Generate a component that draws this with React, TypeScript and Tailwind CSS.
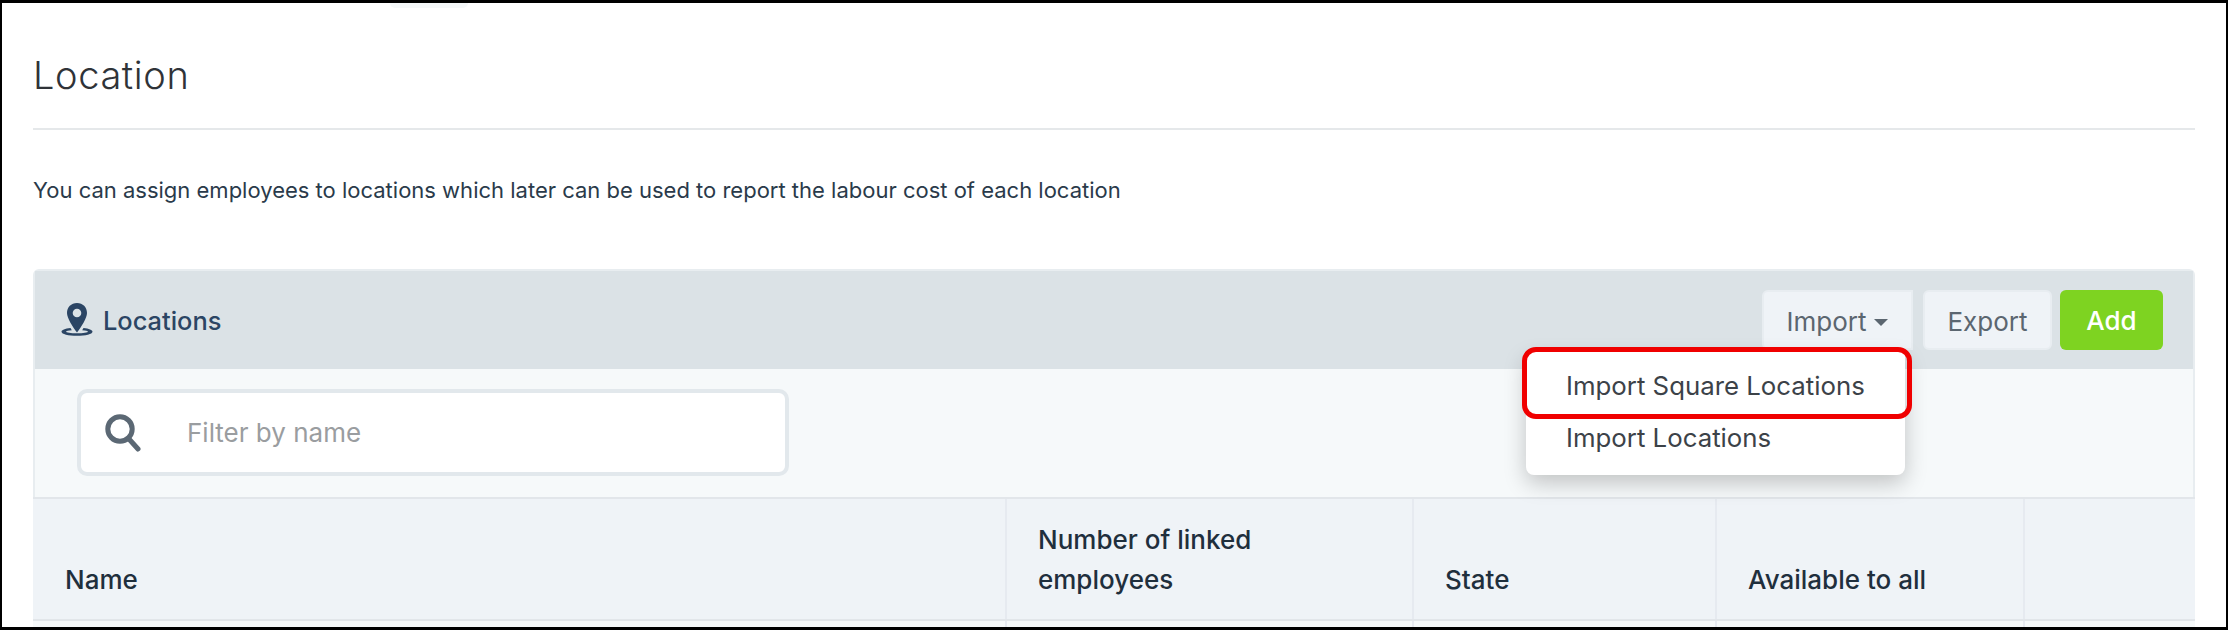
const font = { fontFamily: '"Inter", "Lato", sans-serif' }

function PinIcon() {
  return (
    <svg width="32" height="33" viewBox="0 0 32 33" className="shrink-0">
      <path d="M9.500 25C4 25.600 .5 27 .5 28.700c0 2.400 6.900 4.100 15.500 4.100s15.500-1.700 15.500-4.100c0-1.700-3.500-3.100-9-3.700l-1.300 2.300c3.300.3 5.800.8 5.800 1.400 0 .8-4.800 1.500-11 1.500s-11-.7-11-1.500c0-.6 2.500-1.100 5.800-1.400z" fill="#2b4564" />
      <path fillRule="evenodd" d="M16 0c5.800 0 10 4.300 10 10 0 5-5.500 13.500-10 19.500C11.500 23.500 6 15 6 10 6 4.300 10.200 0 16 0zm0 5.700a4.300 4.300 0 1 0 0 8.600 4.300 4.300 0 0 0 0-8.600z" fill="#2b4564" />
    </svg>
  )
}

function SearchIcon() {
  return (
    <svg width="36" height="38" viewBox="0 0 36 38" className="shrink-0">
      <circle cx="15" cy="15" r="12.200" fill="none" stroke="#5b6874" strokeWidth="5" />
      <path d="M24 25l9 10" fill="none" stroke="#5b6874" strokeWidth="5" strokeLinecap="round" />
    </svg>
  )
}

const columns = [
  { label: 'Name', width: 'w-[974px]', pad: 'pl-[32px]' },
  { label: 'Number of linked employees', width: 'w-[407px]', pad: 'pl-[31px] pr-[100px]' },
  { label: 'State', width: 'w-[303px]', pad: 'pl-[31px]' },
  { label: 'Available to all', width: 'w-[308px]', pad: 'pl-[31px]' },
  { label: '', width: 'w-[170px]', pad: '' },
]

export default function App() {
  return (
    <div style={font} className="relative w-[2228px] h-[630px] bg-white border-t-[3px] border-l-[2px] border-r-[2px] border-b-[3px] border-black overflow-hidden">
      <div className="absolute top-0 left-[388px] w-[78px] h-[5px] bg-[#f5f8f9] rounded-b-lg" />

      <div className="pl-[31px] pr-[31px]">
        <h1 className="pt-[49px] h-[127px] text-[38px] leading-[46px] tracking-[0.6px] font-light text-[#2f3338] border-b-2 border-[#e5e8ea]">Location</h1>
        <p className="mt-[46px] text-[22px] leading-[28px] text-[#2a3a4a]">You can assign employees to locations which later can be used to report the labour cost of each location</p>

        <div className="mt-[65px] rounded-t-md border-x-2 border-t-2 border-[#e8edf0]">
          <div className="h-[98px] bg-[#dbe2e6] flex items-center justify-between pl-[26px] pr-[30px]">
            <div className="flex items-center gap-[10px] text-[25.4px] font-medium text-[#2b4564]">
              <PinIcon />
              <span className="pt-[2px]">Locations</span>
            </div>
            <div className="flex items-center gap-[8px] text-[26px] text-[#5b6670]">
              <button className="w-[151px] h-[60px] pt-[2px] bg-[#eff3f7] border-2 border-[#e8edf1] rounded-l-md flex items-center justify-center gap-[8px]">
                Import
                <span className="w-0 h-0 border-x-[7px] border-x-transparent border-t-[7px] border-t-[#5b6670] mt-[2px]" />
              </button>
              <button className="w-[129px] h-[60px] pt-[2px] bg-[#eff3f7] border-2 border-[#e8edf1] rounded-md ml-[2px]">Export</button>
              <button className="w-[103px] h-[60px] bg-[#7ed321] rounded-md text-white font-medium">Add</button>
            </div>
          </div>

          <div className="h-[128px] bg-[#f6f9fa] pt-[20px] pl-[42px]">
            <div className="w-[712px] h-[87px] bg-white border-[4px] border-[#e2e8ec] rounded-[10px] flex items-center pl-[24px] gap-[46px]">
              <SearchIcon />
              <span className="text-[26px] text-[#9a9da0]">Filter by name</span>
            </div>
          </div>

          <div className="flex h-[124px] bg-[#eff3f7] border-y-2 border-[#e2e6ea] text-[26px] font-medium text-[#1f2f3d] leading-[40px] -mx-[2px]">
            {columns.map((col, i) => (
              <div key={i} className={`${col.width} ${col.pad} flex items-end pb-[19px] ${i < 4 ? 'border-r-2 border-[#e6eaf0]' : ''}`}>
                {col.label}
              </div>
            ))}
          </div>
          <div className="flex h-[8px] bg-[#f6f9fa] -mx-[2px]">
            {columns.map((col, i) => (
              <div key={i} className={`${col.width} ${i < 4 ? 'border-r-2 border-[#e6eaf0]' : ''}`} />
            ))}
          </div>
        </div>
      </div>

      <div className="absolute left-[1524px] top-[349px] w-[379px] h-[123px] bg-white rounded-b-lg shadow-[0_8px_22px_rgba(0,0,0,0.22)] text-[25.8px] text-[#3c4248] pl-[40px]">
        <div className="h-[68px] flex items-center">Import Square Locations</div>
        <div className="h-[36px] flex items-center">Import Locations</div>
      </div>
      <div className="absolute left-[1520px] top-[344px] w-[390px] h-[72px] border-[5px] border-[#f00000] rounded-[14px]" />
    </div>
  )
}
